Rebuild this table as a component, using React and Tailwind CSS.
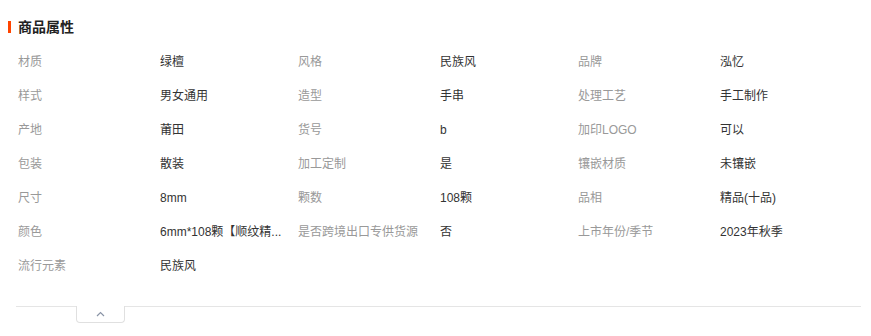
import React from 'react';

const rows = [
  [['材质', '绿檀'], ['风格', '民族风'], ['品牌', '泓忆']],
  [['样式', '男女通用'], ['造型', '手串'], ['处理工艺', '手工制作']],
  [['产地', '莆田'], ['货号', 'b'], ['加印LOGO', '可以']],
  [['包装', '散装'], ['加工定制', '是'], ['镶嵌材质', '未镶嵌']],
  [['尺寸', '8mm'], ['颗数', '108颗'], ['品相', '精品(十品)']],
  [['颜色', '6mm*108颗【顺纹精...'], ['是否跨境出口专供货源', '否'], ['上市年份/季节', '2023年秋季']],
  [['流行元素', '民族风']],
];

export default function App() {
  return (
    <div
      className="w-full h-[336px] bg-white text-[#333]"
      style={{ fontFamily: '"Liberation Sans", "Noto Sans CJK SC", sans-serif' }}
    >
      {/* Title */}
      <div className="flex items-center pt-[14px] pl-[8px] h-[40px]">
        <span className="w-[3px] h-[12px] bg-[#ff4400]" />
        <h2 className="ml-[7px] text-[14px] font-bold leading-[16px] text-[#222]">商品属性</h2>
      </div>

      {/* Attribute table */}
      <div className="pl-[18px] pt-[5px]">
        {rows.map((row, rowIndex) => (
          <div key={`row-${rowIndex}`} className="flex h-[34px] items-center text-[12px]">
            {row.map(([label, value], cellIndex) => (
              <div key={`cell-${rowIndex}-${cellIndex}`} className="flex w-[280px]">
                <span className="w-[142px] text-[#999] whitespace-nowrap">{label}</span>
                <span className="text-[#333] whitespace-nowrap">{value}</span>
              </div>
            ))}
          </div>
        ))}
      </div>

      {/* Collapse toggle */}
      <div className="mt-[23px] ml-[16px] mr-[10px] border-t border-[#e5e5e5]">
        <button className="ml-[60px] -mt-px w-[49px] h-[17px] flex items-center justify-center bg-white border border-t-0 border-[#e0e0e0] rounded-b-[4px]">
          <svg width="9" height="6" viewBox="0 0 9 6" fill="none">
            <path d="M1 5L4.5 1.5L8 5" stroke="#8a94a6" strokeWidth="1.2" />
          </svg>
        </button>
      </div>
    </div>
  );
}
